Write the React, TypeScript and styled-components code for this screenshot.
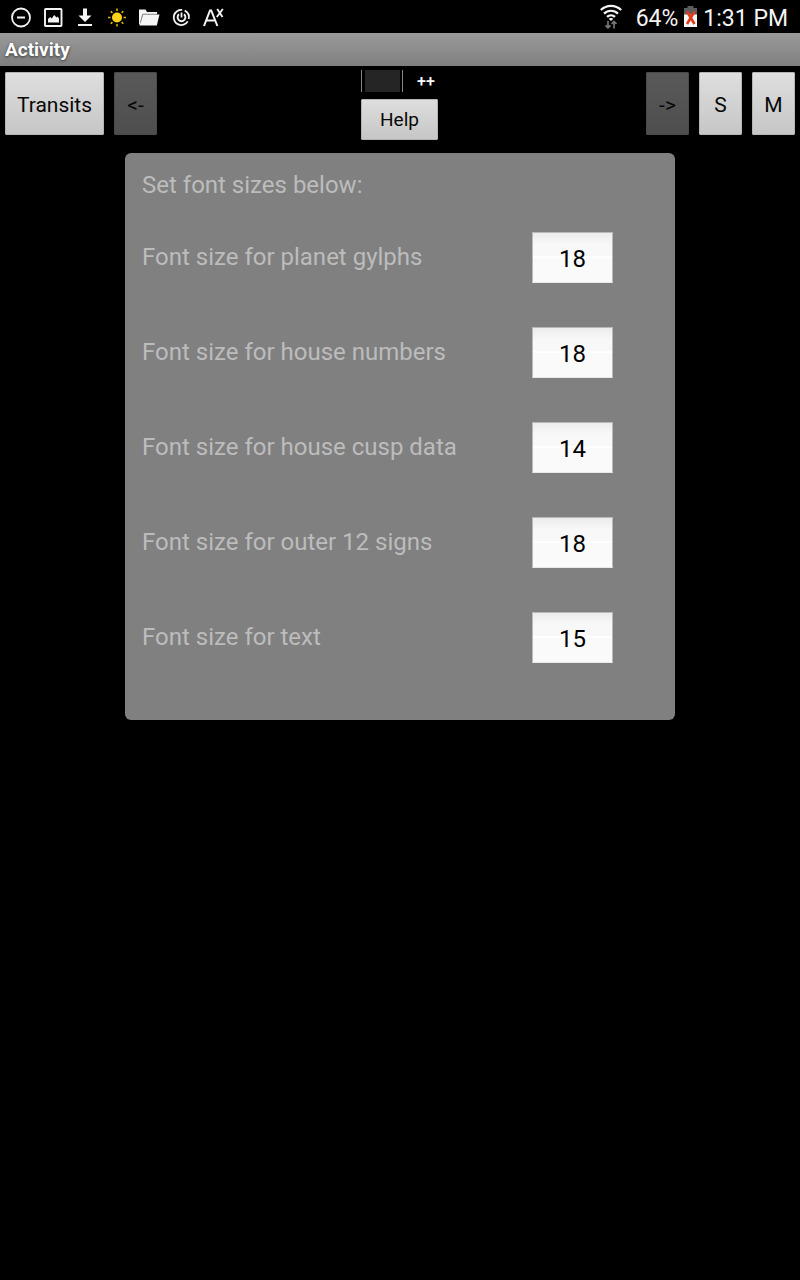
import React, { useState } from "react";
import styled, { createGlobalStyle } from "styled-components";

const GlobalStyle = createGlobalStyle`
  *, *::before, *::after { box-sizing: border-box; }
  body {
    margin: 0;
    background: #000;
    font-family: Roboto, "Liberation Sans", sans-serif;
  }
`;

const Screen = styled.div`
  min-height: 100vh;
  background: #000;
`;

const StatusBar = styled.div`
  display: flex;
  justify-content: space-between;
  align-items: center;
  height: 33px;
  padding: 0 12px 0 10px;
  color: #f4f4f4;
`;

const Notifications = styled.div`
  display: flex;
  gap: 10px;
`;

const SystemInfo = styled.div`
  display: flex;
  align-items: center;
  gap: 6px;
`;

const StatusText = styled.span<{ $indent?: boolean }>`
  margin-left: ${(p) => (p.$indent ? "8px" : "0")};
  padding-top: 4px;
  font-size: 23px;
  line-height: 28px;
`;

const Icon = styled.svg`
  display: block;
  flex: none;
`;

const TitleBar = styled.header`
  display: flex;
  align-items: center;
  height: 33px;
  padding: 0 5px;
  background: linear-gradient(#9a9a9a, #7f7f7f);
`;

const Title = styled.h1`
  margin: 0;
  color: #fff;
  font-size: 19px;
  line-height: 24px;
  font-weight: 700;
  text-shadow: 0 1px 3px rgba(0, 0, 0, 0.65);
`;

const Toolbar = styled.nav`
  display: grid;
  grid-template-columns: 1fr auto 1fr;
  align-items: start;
  padding: 4px 5px 0;
`;

const ToolGroup = styled.div<{ $end?: boolean }>`
  display: flex;
  justify-content: ${(p) => (p.$end ? "flex-end" : "flex-start")};
  gap: 10px;
  padding-top: 2px;
`;

const ToolCenter = styled.div`
  display: flex;
  flex-direction: column;
  gap: 7px;
  width: 78px;
`;

const Button = styled.button<{ $size: "wide" | "narrow" | "short" }>`
  width: ${(p) => ({ wide: "99px", narrow: "43px", short: "77px" })[p.$size]};
  height: ${(p) => (p.$size === "short" ? "41px" : "63px")};
  padding: ${(p) => (p.$size === "short" ? "0" : "2px 0 0")};
  border: 1px solid #b4b4b4;
  border-radius: 1px;
  background: linear-gradient(#dedede, #c6c6c6);
  color: #080808;
  font-family: inherit;
  font-size: ${(p) => (p.$size === "short" ? "19px" : "21px")};
  line-height: 24px;

  &:disabled {
    border-color: #4a4a4a;
    background: linear-gradient(#595959, #4e4e4e);
    color: #080808;
  }
`;

const Toggle = styled.label`
  display: flex;
  align-items: center;
  gap: 14px;
  height: 22px;
  color: #fff;
  font-size: 16px;
  line-height: 20px;
  font-weight: 500;
`;

const ToggleText = styled.span`
  padding-top: 2px;
`;

const ToggleBox = styled.input`
  appearance: none;
  width: 42px;
  height: 22px;
  margin: 0;
  border: solid #858585;
  border-width: 0 1px;
  background: #252525;
  box-shadow: inset 3px 0 #000, inset -2px 0 #000;
`;

const Panel = styled.form`
  width: min(550px, calc(100% - 32px));
  margin: 13px auto 0;
  padding: 18px 62px 57px 17px;
  border-radius: 6px;
  background: #808080;
  color: #bcbcbc;
  font-size: 24px;
  line-height: 28px;
`;

const PanelHeading = styled.p`
  margin: 0 0 33px;
`;

const Fields = styled.div`
  display: flex;
  flex-direction: column;
  gap: 44px;
`;

const Field = styled.div`
  display: flex;
  justify-content: space-between;
  align-items: center;
`;

const FieldLabel = styled.label`
  padding-bottom: 2px;
`;

const SizeInput = styled.input`
  width: 81px;
  height: 51px;
  padding: 2px 0 0;
  border: 1px solid #b9b9b9;
  border-bottom-color: #e8e8e8;
  background: linear-gradient(#ececec, #f8f8f8 24%, #f8f8f8 47%, #fff 48%, #fff 51%, #fafafa 52%);
  color: #000;
  font-family: inherit;
  font-size: 24px;
  line-height: 28px;
  text-align: center;
`;

const sizeFields = [
  { id: "planets", label: "Font size for planet gylphs", value: "18" },
  { id: "houses", label: "Font size for house numbers", value: "18" },
  { id: "cusps", label: "Font size for house cusp data", value: "14" },
  { id: "signs", label: "Font size for outer 12 signs", value: "18" },
  { id: "text", label: "Font size for text", value: "15" },
];

function NotificationIcon({ children }: { children: React.ReactNode }) {
  return (
    <Icon width="22" height="22" viewBox="0 0 22 22" fill="none" stroke="#f4f4f4" aria-hidden="true">
      {children}
    </Icon>
  );
}

function NotificationIcons() {
  return (
    <Notifications>
      <NotificationIcon>
        <circle cx="11" cy="11.5" r="9" strokeWidth="1.8" />
        <path d="M7 11.5h8" strokeWidth="2" />
      </NotificationIcon>
      <NotificationIcon>
        <rect x="3" y="3" width="16.5" height="17" rx="0.8" strokeWidth="1.9" />
        <path d="M6 16.5v-3.5l2.200-2 1.500 1.500 2.500-3.500 2.300 2.500 1-1 1.500 2v4z" fill="#f4f4f4" stroke="none" />
      </NotificationIcon>
      <NotificationIcon>
        <path d="M9 2.5h4v7h4.5L11 16 4.5 9.5H9zM4 18h14v2H4z" fill="#f4f4f4" stroke="none" />
      </NotificationIcon>
      <NotificationIcon>
        <circle cx="11" cy="11.5" r="5" fill="#ffd21c" stroke="none" />
        <path
          d="M11 2.500v2.500M11 18v2.500M2 11.500h2.500M17.500 11.500H20M4.700 5.200l1.700 1.700M15.600 16.100l1.700 1.700M4.700 17.800l1.700-1.700M15.600 6.900l1.700-1.700"
          stroke="#e6b800"
          strokeWidth="1.500"
        />
      </NotificationIcon>
      <NotificationIcon>
        <path d="M1 18.500V3.500h6.500l1.500 2.500h10v2.500H4.500L1.800 18.500z" fill="#f4f4f4" stroke="none" />
        <path d="M5 8.500H21.500L18.800 19.500H1.500z" fill="#f4f4f4" stroke="none" />
        <path d="M19.500 8.200H4.800L2.500 16" stroke="#8a8a8a" strokeWidth="0.800" />
      </NotificationIcon>
      <NotificationIcon>
        <path d="M12.200 3.900A7.600 7.600 0 1 0 17.800 15.400" strokeWidth="1.800" />
        <path d="M14.700 4.600A7.600 7.600 0 0 1 18.700 13" strokeWidth="1.800" />
        <path d="M9 8.300a3.900 3.900 0 1 0 5 0" strokeWidth="1.900" />
        <path d="M11.500 6.500v5" strokeWidth="1.800" />
      </NotificationIcon>
      <NotificationIcon>
        <path d="M2 20L8 4.500h1.200L15.400 20M4.200 14.500h9" strokeWidth="2" />
        <path d="M15.200 3l5.300 8M20.800 3l-6 8" strokeWidth="1.900" />
      </NotificationIcon>
    </Notifications>
  );
}

function WifiIcon() {
  return (
    <Icon width="22" height="26" viewBox="0 0 22 26" fill="none" stroke="#f4f4f4" strokeWidth="2.2" aria-hidden="true">
      <path d="M.8 6a14.500 14.500 0 0 1 20.400 0M4 9.600a10 10 0 0 1 14 0M7 12.900a5.800 5.800 0 0 1 8 0" />
      <path d="M8.600 14.800q2.400-1.600 4.800 0L11 17z" fill="#f4f4f4" stroke="none" />
      <path d="M8 17v7M5.500 21.300L8 23.800l2.500-2.500M14 24.500v-7M11.500 20l2.500-2.500 2.500 2.500" stroke="#777" strokeWidth="1.700" />
    </Icon>
  );
}

function BatteryIcon() {
  return (
    <Icon width="13" height="21" viewBox="0 0 13 21" aria-hidden="true">
      <path d="M3.500 0h6v2H13v7H0V2h3.500z" fill="#5c5c5c" />
      <path d="M0 8.500h13V21H0z" fill="#f7f7f7" />
      <path d="M3 5.500l7.500 12.500M10.500 5.500L3 18" stroke="#e23a16" strokeWidth="2.600" />
    </Icon>
  );
}

function SizeField({ id, label, initial }: { id: string; label: string; initial: string }) {
  const [value, setValue] = useState(initial);
  return (
    <Field>
      <FieldLabel htmlFor={id}>{label}</FieldLabel>
      <SizeInput id={id} inputMode="numeric" value={value} onChange={(e) => setValue(e.target.value)} />
    </Field>
  );
}

export default function App() {
  return (
    <Screen>
      <GlobalStyle />
      <StatusBar>
        <NotificationIcons />
        <SystemInfo>
          <WifiIcon />
          <StatusText $indent>64%</StatusText>
          <BatteryIcon />
          <StatusText>1:31 PM</StatusText>
        </SystemInfo>
      </StatusBar>
      <TitleBar>
        <Title>Activity</Title>
      </TitleBar>
      <Toolbar>
        <ToolGroup>
          <Button type="button" $size="wide">Transits</Button>
          <Button type="button" $size="narrow" disabled>&lt;-</Button>
        </ToolGroup>
        <ToolCenter>
          <Toggle>
            <ToggleBox type="checkbox" />
            <ToggleText>++</ToggleText>
          </Toggle>
          <Button type="button" $size="short">Help</Button>
        </ToolCenter>
        <ToolGroup $end>
          <Button type="button" $size="narrow" disabled>-&gt;</Button>
          <Button type="button" $size="narrow">S</Button>
          <Button type="button" $size="narrow">M</Button>
        </ToolGroup>
      </Toolbar>
      <main>
        <Panel>
          <PanelHeading>Set font sizes below:</PanelHeading>
          <Fields>
            {sizeFields.map((f) => (
              <SizeField key={f.id} id={f.id} label={f.label} initial={f.value} />
            ))}
          </Fields>
        </Panel>
      </main>
    </Screen>
  );
}
